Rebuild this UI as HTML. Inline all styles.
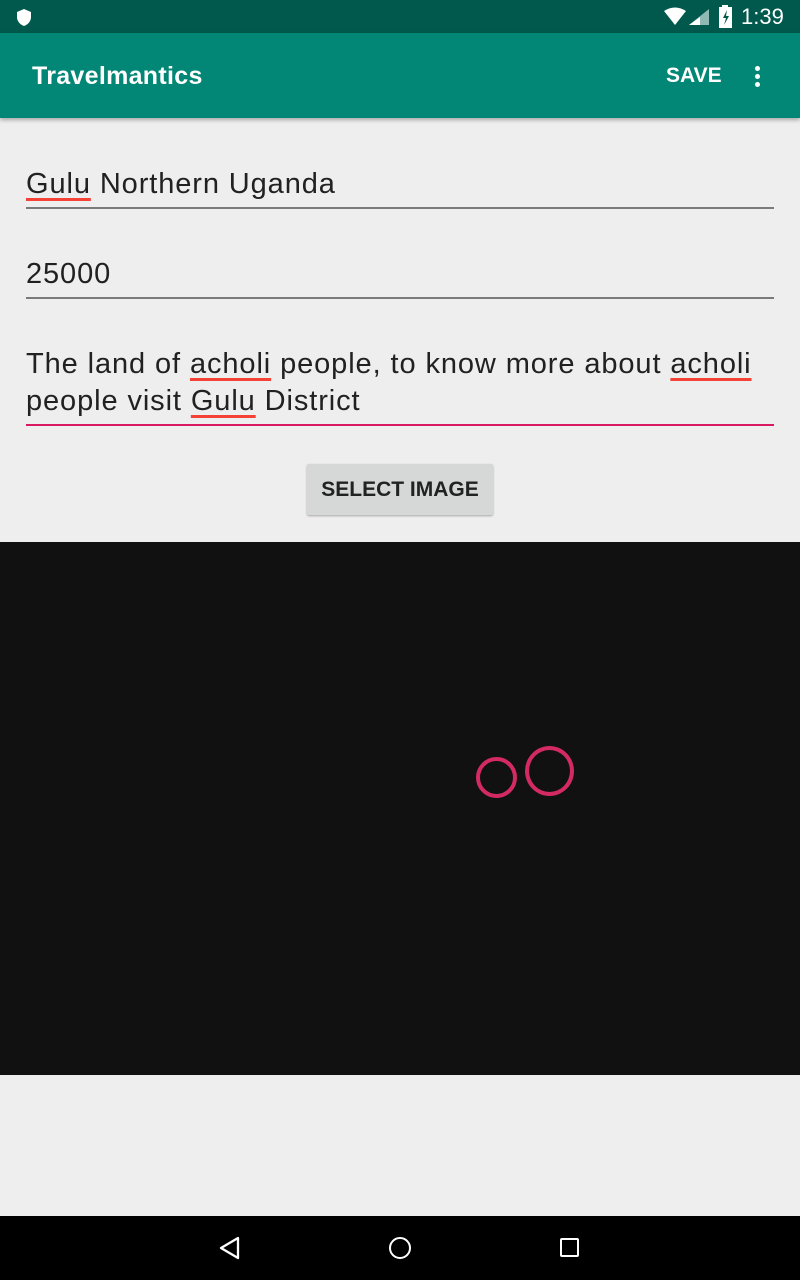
<!DOCTYPE html>
<html><head><meta charset="utf-8"><style>
*{margin:0;padding:0;box-sizing:border-box}
body{width:800px;height:1280px;background:#eeeeee;position:relative;overflow:hidden;font-family:"Liberation Sans",sans-serif;color:#212121}
.a{position:absolute}
.t{position:absolute;left:26px;font-size:29px;line-height:37px;white-space:nowrap;letter-spacing:0.9px}
.u{text-decoration:underline;text-decoration-color:#f44336;text-decoration-thickness:2.5px;text-underline-offset:5px}
</style></head><body>
<div class="a" style="left:0;top:0;width:800px;height:33px;background:#00594c"></div>
<svg class="a" style="left:15px;top:8px" width="18" height="19" viewBox="0 0 18 19"><path d="M9 1 L16 4 V9 C16 14 12 17 9 18 C6 17 2 14 2 9 V4 Z" fill="#fff"/></svg>
<svg class="a" style="left:664px;top:7px" width="58" height="20" viewBox="0 0 58 20"><path d="M0 4 Q11 -3 22 4 L11 18 Z" fill="#fff"/><path d="M25 18 L45 18 L45 2 Z" fill="#8fb9b2"/><path d="M25 18 L36 18 L36 10 Z" fill="#fff"/></svg>
<svg class="a" style="left:718px;top:5px" width="16" height="24" viewBox="0 0 16 24"><rect x="4" y="0" width="6" height="3" fill="#fff"/><rect x="1" y="2" width="13" height="21" fill="#fff"/><path d="M9 5 L5 13 H8 L6 20 L11 11 H8 Z" fill="#00594c"/></svg>
<div class="a" style="left:741px;top:3px;color:#fff;font-size:22px;line-height:28px">1:39</div>
<div class="a" style="left:0;top:33px;width:800px;height:85px;background:#028675;box-shadow:0 2px 4px rgba(0,0,0,.3)"></div>
<div class="a" style="left:32px;top:60px;color:#fff;font-size:25px;font-weight:bold;line-height:32px;letter-spacing:0.3px">Travelmantics</div>
<div class="a" style="left:666px;top:62px;color:#fff;font-size:21px;font-weight:bold;line-height:28px">SAVE</div>
<div class="a" style="left:755px;top:66px;width:5px;height:5px;border-radius:50%;background:#fff;box-shadow:0 8px 0 #fff,0 16px 0 #fff"></div>
<div class="t" style="top:166px"><span class="u">Gulu</span> Northern Uganda</div>
<div class="a" style="left:26px;top:207px;width:748px;height:2px;background:#7a7a7a"></div>
<div class="t" style="top:256px">25000</div>
<div class="a" style="left:26px;top:297px;width:748px;height:2px;background:#7a7a7a"></div>
<div class="t" style="top:346px">The land of <span class="u">acholi</span> people, to know more about <span class="u">acholi</span></div>
<div class="t" style="top:383px">people visit <span class="u">Gulu</span> District</div>
<div class="a" style="left:26px;top:424px;width:748px;height:2px;background:#d81b60"></div>
<div class="a" style="left:307px;top:464px;width:186px;height:51px;background:#d6d7d7;border-radius:2px;box-shadow:0 1px 2px rgba(0,0,0,.3);font-size:21px;font-weight:bold;color:#222;text-align:center;line-height:51px;letter-spacing:0px">SELECT IMAGE</div>
<div class="a" style="left:0;top:542px;width:800px;height:533px;background:#111111"></div>
<div class="a" style="left:476px;top:757px;width:41px;height:41px;border:4px solid #d42a63;border-radius:50%"></div>
<div class="a" style="left:525px;top:746px;width:49px;height:50px;border:4px solid #d42a63;border-radius:50%"></div>
<div class="a" style="left:0;top:1216px;width:800px;height:64px;background:#000"></div>
<svg class="a" style="left:218px;top:1236px" width="24" height="24" viewBox="0 0 24 24"><path d="M20 2 L3 12 L20 22 Z" fill="none" stroke="#fff" stroke-width="2.3" stroke-linejoin="round"/></svg>
<div class="a" style="left:389px;top:1237px;width:22px;height:22px;border:2.3px solid #fff;border-radius:50%"></div>
<div class="a" style="left:560px;top:1238px;width:19px;height:19px;border:2.3px solid #fff;border-radius:2px"></div>
</body></html>
